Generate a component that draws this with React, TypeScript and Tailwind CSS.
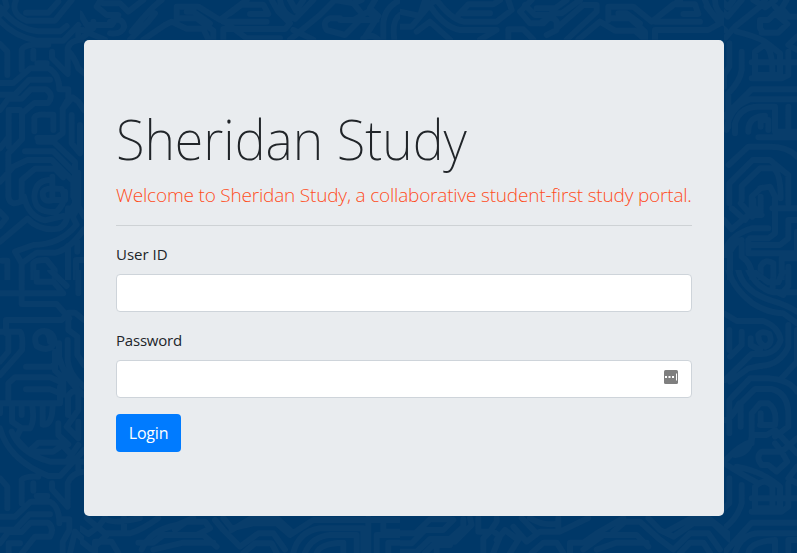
type Region = { at: string; w: number; h: number; d: string[] };

// Backdrop ornament: line work for every visible strip, drawn on a 3x grid.
const regions: Region[] = [
  {
    at: "translate(0 0)", w: 252, h: 840,
    d: [
      "M0 62Q40 108 110 122H190L235 75", "M0 22Q50 88 115 94H180L200 78", "M48 0Q30 42 80 62H165L215 0", "M78 38H145L175 5", "M0 45L20 20L15 0",
      "M22 225V155L0 132", "M65 210V150Q72 134 105 134H145", "M100 152V176", "M112 190H140", "M156 155V174L203 222V145Q210 120 252 118", "M235 112V90H252", "M203 150Q225 175 235 205L252 220",
      "M0 249H40L91 205H146Q178 223 178 268", "M0 284H45L88 239H150", "M0 330L25 296H65L92 268H138Q164 286 144 309H103L66 340V418L25 460V590Q30 620 65 604V540L105 506H165L190 532",
      "M26 440V330H60", "M0 445L25 412", "M180 268H205V296L188 326V400L168 414H112", "M103 394V353Q108 342 140 344H160V390", "M188 326L218 292L236 306L252 330", "M215 345V430L240 460V375", "M75 454H160L230 525", "M115 425H160L225 486V610L205 640",
      "M0 545L40 500L82 480H155L220 544V590L252 650", "M157 530V600", "M195 575V600H160Q128 610 128 580Q130 560 185 567Q205 600 170 635Q105 642 103 590Q105 544 145 540", "M72 590Q85 650 135 661L190 648", "M0 635L18 655L0 678", "M0 725L82 656Q120 695 175 686Q205 674 204 625", "M235 518V620L218 650L230 674Q180 735 100 735L45 755L65 790V840", "M65 790L110 758H165Q205 752 252 688", "M5 782H22V840", "M100 840V790Q105 779 140 780L164 810V840", "M204 738V840", "M232 725V755", "M252 780H228V840",
    ],
  },
  {
    at: "translate(0 270)", w: 252, h: 849,
    d: [
      "M0 70H190L160 35H110V0", "M65 0V102H170L208 145", "M150 0L200 48", "M235 0V70", "M18 190V150H185L205 128H225L252 150", "M0 185H60Q70 195 66 240L0 315", "M25 195V245L0 275",
      "M150 215Q148 180 124 184Q96 194 110 228Q150 250 164 216Q160 178 124 184", "M78 290H155L177 272V220", "M25 390V340L45 322H150L190 340", "M78 358H150L190 374V325L165 302V245", "M205 145V180L232 200V255L252 285", "M203 210V270Q207 315 252 350", "M177 260Q195 330 252 375",
      "M0 430V400H180V350", "M36 400V455L65 475H90Q105 455 96 402", "M65 410V435", "M0 475Q25 570 145 618H180L252 540", "M35 485Q60 550 150 575H200L235 525", "M63 475L48 505L85 545L115 518H180L210 550", "M85 545H160L195 520", "M128 405V464Q158 470 158 400", "M175 460V495L205 523", "M204 435V380Q218 355 235 370V420L200 470L235 505V455",
      "M22 715V650L0 625", "M65 700V630Q75 618 115 620", "M100 640V662", "M110 678H142", "M156 640V658L203 710V640Q215 608 252 605", "M235 600V575H252", "M0 740H45L92 695H150Q178 710 178 760", "M0 779H45L88 733H150", "M0 820L25 786H65L92 758H145Q164 775 150 800H105L66 849", "M26 849V820H60", "M178 748H208V780L188 816V849", "M210 849L225 785L252 812",
    ],
  },
  {
    at: "translate(700 0)", w: 291, h: 840,
    d: [
      "M35 0L83 50L125 0", "M65 0L83 22L100 0", "M0 70L70 120L105 80L180 20L195 0", "M0 25L75 90", "M110 95Q180 112 205 132L240 160V225H165V155L190 137Q218 137 217 225", "M160 0L195 22L225 0", "M185 98H235L262 72L225 40L205 60H180V85L190 98", "M225 20L255 50H291", "M260 0L245 25L265 48", "M291 110L265 135L291 150", "M155 187H291", "M265 155V225L245 235H155",
      "M88 130V200L72 225V260", "M125 155V210Q120 245 85 280V380", "M72 350L155 268H291", "M80 390Q88 320 150 298H291", "M105 400V370Q120 320 175 320H225V395H291", "M145 395Q143 350 195 347", "M175 412H291", "M265 320V395", "M182 380V360H205V390",
      "M86 495L145 440H210Q265 440 291 470", "M88 610V550L158 480H210L265 525V610", "M125 600V558L180 505H220Q242 520 242 595", "M157 650L122 610", "M182 565L155 590V635L135 660L95 625", "M180 565L210 560L225 590V700L205 715H150", "M160 600V620L185 645", "M182 590V645H145L95 688L72 660", "M217 625H291", "M291 660H265V715L240 735H155", "M291 695V760H145V720", "M75 765Q78 710 155 685H205", "M90 840V755Q105 725 125 720", "M125 730V770Q157 790 157 840", "M182 840V800Q195 773 220 790V840", "M245 840V775H291", "M265 840V800",
    ],
  },
  {
    at: "translate(700 270)", w: 291, h: 849,
    d: [
      "M85 0Q100 55 155 98Q200 128 250 130L291 160", "M115 0Q130 65 215 92Q260 105 291 125", "M145 0Q170 55 220 67H291", "M155 0L205 37H235L250 0", "M218 30V60L250 75", "M265 0V48L245 70",
      "M72 130L110 153H190Q235 170 242 210Q230 250 185 252H155L75 330", "M175 195Q185 180 208 192Q220 220 196 230Q174 220 175 195", "M152 205V225L180 240", "M88 180V240", "M125 185V225L90 260", "M265 165V230Q240 285 180 288L145 295L90 335", "M291 180V275L245 325",
      "M88 490V390L150 325H205Q270 330 291 365", "M122 470V400L165 357H215Q265 370 265 435V470L225 500", "M72 450Q90 455 118 400", "M155 520V430L180 400H205Q232 418 225 465H180", "M182 430V455", "M72 575Q118 525 155 515L157 495H200L225 480L291 550", "M72 580L130 615L175 640", "M105 555Q150 550 155 500", "M110 590Q190 605 240 650V715H165V650Q195 620 217 650V720", "M185 585H205L230 605L262 575L245 545H185Q165 560 185 585", "M225 520L245 545L291 505", "M291 590L265 625L291 640", "M155 685H291", "M265 640V710L245 725H155",
      "M88 625V700L0 780", "M125 645V700Q110 755 50 790V849", "M72 849L155 758H291", "M105 849Q125 790 180 790H291", "M145 849Q150 815 225 810V849", "M265 849V810H291",
    ],
  },
  {
    at: "translate(80 0)", w: 960, h: 119,
    d: [
      "M0 40L20 75H95L115 45H80L50 20L62 0", "M70 10H120L145 35L190 0", "M155 95Q210 25 245 0", "M40 65V85Q20 95 0 90", "M90 65Q128 48 133 80Q125 105 90 100", "M0 119L25 98L75 119", "M150 119L205 65L225 40", "M190 119L255 75L275 65L320 86H370L385 119",
      "M290 65V20H355L420 60L500 0", "M290 55H350L400 92V119", "M320 35H340L390 70", "M430 119V87H615L630 70L595 35L575 0", "M430 65H560", "M450 40L485 14H550L565 42H510", "M440 70L500 115H600", "M600 0Q605 40 645 57L700 0", "M630 0L648 32L670 0", "M630 119L720 45L765 0", "M640 90L700 119", "M765 0L820 10L845 0", "M780 55H750Q725 65 740 90L795 105L840 60H890L865 35L820 60H780", "M820 10L845 40", "M885 0L870 25L895 48L850 119", "M960 0Q910 25 910 75V119", "M960 45Q935 60 943 119", "M850 115Q875 98 895 119",
    ],
  },
  {
    at: "translate(400 0)", w: 972, h: 119,
    d: [
      "M0 35L60 48L75 0", "M0 80H35L85 20L105 0", "M50 95L90 65L150 119", "M80 0Q125 80 180 90H290L240 119", "M110 0Q150 55 190 65H290L335 30L325 0", "M175 45L205 13H280L300 0", "M180 40H270", "M325 119V88H370L400 119",
      "M395 0L360 35L390 70H430L455 45H405L375 15", "M420 70Q455 40 470 65V90L440 105", "M455 40H485L540 0", "M410 25H465L500 0", "M500 119L590 35V15H550L475 80", "M535 119L600 65L645 92H705L735 119", "M625 60V20H700L755 65L840 0", "M625 55H690L735 95V119", "M655 40H680L720 70", "M765 119V90H925L960 70L920 20", "M765 65H900", "M780 45L820 13H885L895 42H850", "M915 0Q930 45 972 70", "M945 0Q945 30 972 50",
    ],
  },
  {
    at: "translate(80 510)", w: 960, h: 129,
    d: [
      "M0 55L25 72L55 50L75 23", "M20 24L75 70H150Q185 60 235 24", "M0 90L35 119L80 75", "M132 24V65", "M45 129V95H95L115 129", "M75 24Q90 45 180 24", "M185 119Q210 60 290 45L340 24", "M175 98H220L250 75H370L410 110", "M220 119L310 98H400", "M310 75H350L390 55L375 35H320L285 60", "M405 30L430 60L480 110L535 70H580L615 119", "M430 24L455 55L520 40H590L630 75L700 30H960", "M490 129L525 100H575L590 129", "M455 60L515 24H590L635 65", "M640 129Q655 65 720 55H850V129", "M675 129Q695 80 750 75H830V129", "M710 129Q720 100 790 98V129", "M865 24V129", "M890 129V75H960", "M910 40V65H960", "M925 129V98H960",
    ],
  },
  {
    at: "translate(400 510)", w: 990, h: 129,
    d: [
      "M0 70H45L90 28H150", "M0 100H35L75 60H130L160 30", "M0 125H50L90 87H150L190 50V28", "M75 129L110 95H165L215 45L210 24", "M110 129V105H150", "M235 24V65H270L290 35V24", "M250 129V85L275 60L300 80L280 129", "M290 90L315 60L355 90L330 129", "M340 50L380 95L420 65H480L565 24", "M365 24L410 70", "M390 24Q430 50 475 40", "M475 24V65", "M395 129L430 98H470L490 129", "M510 129V98H550L590 70L670 24", "M550 119L610 75H710L745 110", "M640 65L675 35H720L775 85L820 119L870 70H925L960 119", "M590 119L650 98H740", "M745 24L780 60L820 80L880 40H940L990 90", "M840 129L870 98H910L930 129", "M800 65L875 24H925L990 75",
    ],
  },
];

function Backdrop() {
  return (
    <svg className="absolute inset-0" width="797" height="553" aria-hidden="true">
      {regions.map((r, i) => (
        <g key={r.at} transform={r.at}>
          <clipPath id={`strip-${i}`}>
            <rect x={i === 2 || i === 3 ? 24 : 0} width={i === 2 || i === 3 ? 73 : i === 4 || i === 6 ? 320 : r.w / 3} height={r.h / 3} />
          </clipPath>
          <g clipPath={`url(#strip-${i})`}>
            <path transform="scale(.33333)" fill="none" stroke="#083d6b" strokeWidth="18" strokeLinecap="round" strokeLinejoin="round" d={r.d.join("")} />
          </g>
        </g>
      ))}
    </svg>
  );
}

export default function App() {
  return (
    <div className="relative h-[553px] w-[797px] overflow-hidden bg-[#003868] pt-10 pl-[84px] font-['Open_Sans','Noto_Sans',sans-serif] text-base text-[#212529]">
      <Backdrop />
      <main className="relative h-[476px] w-[640px] rounded-[5px] bg-[#e9ecef] px-8 pt-16">
        <h1 className="h-[67px] origin-left scale-x-[.95] whitespace-nowrap font-['Noto_Sans','Open_Sans',sans-serif] text-[55px] leading-[70px] font-extralight tracking-[0px]">Sheridan Study</h1>
        <p className="mt-2 h-[30px] whitespace-nowrap text-[19px] leading-[32px] font-light tracking-[-0.19px] text-[#ff4d1c]">Welcome to Sheridan Study, a collaborative student-first study portal.</p>
        <hr className="mt-4 border-[#ced2d5]" />
        <form onSubmit={(e) => e.preventDefault()}>
          <label htmlFor="user" className="mt-4 block h-6 text-[15px] leading-[24px] tracking-[0px]">User ID</label>
          <input id="user" className="mt-2 block h-[38px] w-full rounded border border-[#ced4da] bg-white px-3 outline-none" />
          <label htmlFor="password" className="mt-4 block h-6 text-[15px] leading-[24px] tracking-[-0.2px]">Password</label>
          <div className="mt-2 flex h-[38px] items-center justify-end rounded border border-[#ced4da] bg-white pr-[13px]">
            <input id="password" type="password" className="h-full min-w-0 flex-1 px-3 outline-none" />
            <svg width="14" height="14" viewBox="0 0 14 14" className="mb-1 shrink-0">
              <rect width="14" height="14" rx="1.5" fill="#7f7f7f" />
              <path d="M1 6h2v2H1zM4.5 6h2v2h-2zM8 6h2v2H8zM12 3.5h1v7h-1z" fill="white" />
            </svg>
          </div>
          <button className="mt-4 block h-[38px] w-[65px] rounded bg-[#007bff] text-[16px] leading-[38px] tracking-[-0.2px] text-white">Login</button>
        </form>
      </main>
    </div>
  );
}
